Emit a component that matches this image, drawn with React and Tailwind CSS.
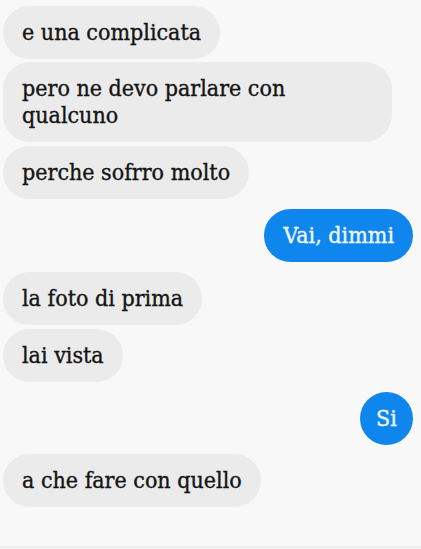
export default function App() {
  const font = { fontFamily: '"DejaVu Serif Condensed", "DejaVu Serif", serif' };
  const base = "rounded-[27px] px-[19px] py-[13px] text-[23px] leading-[27px] font-stretch-condensed [-webkit-text-stroke:0.35px_currentColor]";
  const gray = "self-start bg-[#ebebeb] text-[#141414] " + base;
  const blue = "self-end bg-[#0e86ee] text-[#eef8ff] " + base;
  return (
    <div className="w-[421px] h-[549px] bg-[#f8f8f8] flex flex-col overflow-hidden" style={font}>
      <div className="flex flex-col pl-[3px] pr-[8px] pt-[6px] flex-1">
        <div className={gray}>e una complicata</div>
        <div className={gray + " mt-[3px] w-[389px]"}>
          pero ne devo parlare con<br />qualcuno
        </div>
        <div className={gray + " mt-[4px]"}>perche sofrro molto</div>
        <div className={blue + " mt-[10px]"}>Vai, dimmi</div>
        <div className={gray + " mt-[10px]"}>la foto di prima</div>
        <div className={gray + " mt-[4px]"}>lai vista</div>
        <div className="self-end bg-[#0e86ee] text-[#eef8ff] rounded-full w-[53px] h-[53px] flex items-center justify-center text-[23px] font-stretch-condensed [-webkit-text-stroke:0.35px_currentColor] mt-[10px]">Si</div>
        <div className={gray + " mt-[9px]"}>a che fare con quello</div>
      </div>
      <div className="h-[3px] bg-[#f1f1f1] border-t border-[#ececec]" />
    </div>
  );
}
